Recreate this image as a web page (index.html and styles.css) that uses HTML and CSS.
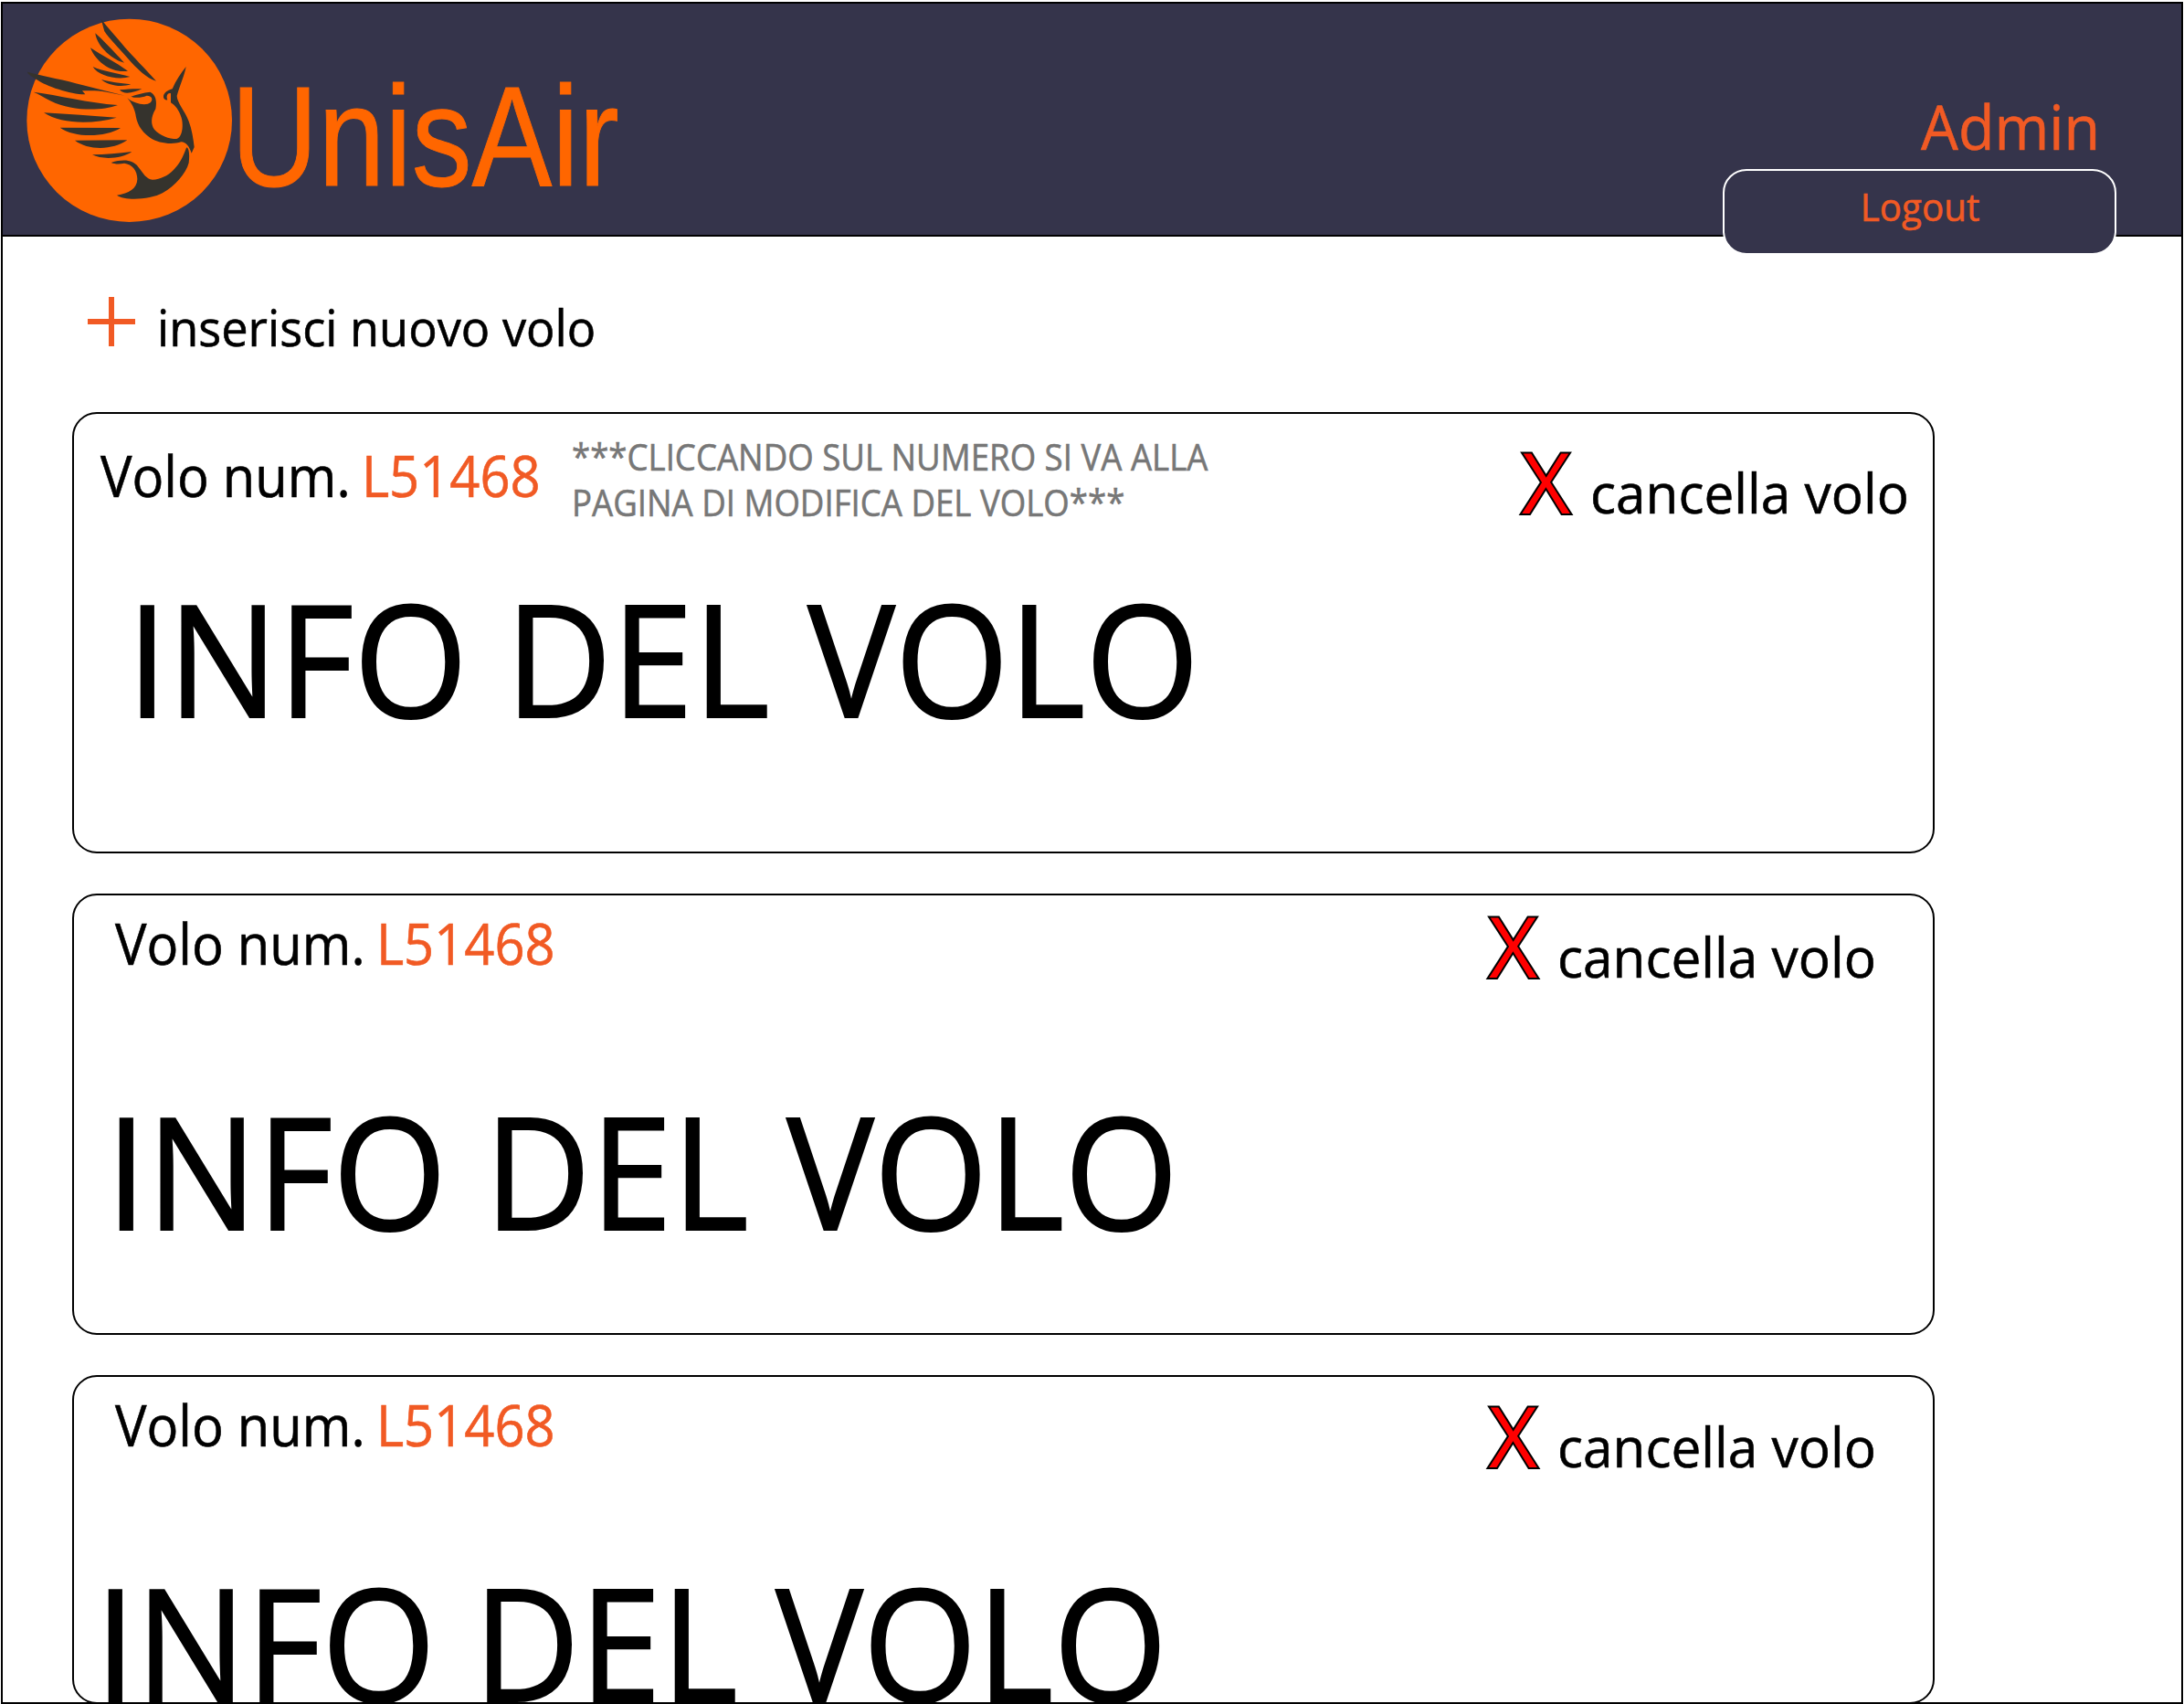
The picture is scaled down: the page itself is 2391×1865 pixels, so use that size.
FILE: index.html
```html
<!DOCTYPE html>
<html lang="it">
<head>
<meta charset="utf-8">
<title>UnisAir - Admin</title>
<link rel="stylesheet" href="styles.css">
</head>
<body>
<div class="frame">
  <header class="header">
    <div class="brand">
      <svg class="logo" viewBox="9 12 744 759" aria-hidden="true">
        <ellipse cx="425" cy="395.500" rx="337" ry="333.500" fill="#ff6600"/>
        <g fill="#35332d">
          <path d="M332 63 C352 88 385 125 410 155 C438 186 475 224 513 266 C482 258 450 226 418 190 C388 155 360 128 343 103 Z"/>
          <path d="M313 109 C335 128 370 165 408 206 C375 200 318 155 313 109Z"/>
          <path d="M297 157 C335 182 380 205 420 233 C370 242 315 205 297 157Z"/>
          <path d="M305 219 C335 234 385 239 427 252 C385 264 322 249 305 219Z"/>
          <path d="M333 261 C360 270 395 272 430 277 C395 289 350 278 333 261Z"/>
          <path d="M393 295 C418 293 440 291 466 292 C440 305 405 312 393 295Z"/>
          <path d="M90 236 C150 252 215 263 270 279 L350 299 L410 314 L350 302 C320 296 290 298 270 298 L280 310 C235 311 150 283 120 261 C108 252 92 246 90 236Z"/>
          <path d="M110 302 C190 312 290 338 387 345 C330 366 235 364 168 332 C145 321 128 309 110 302Z"/>
          <path d="M144 370 C225 374 300 381 383 386 C300 410 200 407 144 370Z"/>
          <path d="M197 419 L396 420 C345 452 245 453 197 419Z"/>
          <path d="M246 461 L418 460 C370 494 290 494 246 461Z"/>
          <path d="M303 508 C345 508 390 503 433 498 C400 522 335 525 303 508Z"/>
          <path d="M418 322 C440 341 480 349 494 337 C504 326 499 314 482 314 C465 321 446 323 430 317 C452 310 470 304 493 302 C512 311 516 333 511 358 C495 384 495 409 507 425 C526 446 555 456 580 456 C601 450 603 406 595 384 C588 362 575 345 561 337 L561 307 C552 303 544 315 550 328 C538 330 534 318 539 309 C548 296 561 294 566 292 C577 266 594 240 611 219 C607 244 590 282 581 315 C582 338 606 362 620 398 C630 424 635 455 638 483 L629 503 C622 482 611 466 595 466 C564 476 520 470 493 452 C460 429 449 402 445 374 C439 350 430 336 418 322Z"/>
          <path d="M365 534 C405 522 436 524 454 548 C471 569 480 588 501 590 C555 587 592 544 612 485 C620 482 624 508 620 535 C611 570 574 612 535 633 C493 656 410 660 384 641 C423 634 450 621 451 588 C451 560 434 539 408 536 C391 540 377 539 365 534Z"/>
        </g>
      </svg>
      <span class="brand-name">UnisAir</span>
    </div>
    <div class="user">Admin</div>
    <a class="logout"><span class="logout-label">Logout</span></a>
  </header>
  <main class="content">
    <a class="add">
      <svg class="plus" viewBox="0 0 52 54" aria-hidden="true">
        <path d="M26 0V54M0 27H52" stroke="#f15a24" stroke-width="6"/>
      </svg>
      <span class="add-label">inserisci nuovo volo</span>
    </a>
    <section class="flight flight-first">
      <div class="flight-head">
        <div class="flight-title">Volo num. <a class="flight-code">L51468</a></div>
        <p class="note">***CLICCANDO SUL NUMERO SI VA ALLA<br>PAGINA DI MODIFICA DEL VOLO***</p>
        <a class="cancel"><span class="cross">X</span><span class="cancel-label">cancella volo</span></a>
      </div>
      <div class="info">INFO DEL VOLO</div>
    </section>
    <section class="flight flight-second">
      <div class="flight-head">
        <div class="flight-title">Volo num. <a class="flight-code">L51468</a></div>
        <a class="cancel"><span class="cross">X</span><span class="cancel-label">cancella volo</span></a>
      </div>
      <div class="info">INFO DEL VOLO</div>
    </section>
    <section class="flight flight-third">
      <div class="flight-head">
        <div class="flight-title">Volo num. <a class="flight-code">L51468</a></div>
        <a class="cancel"><span class="cross">X</span><span class="cancel-label">cancella volo</span></a>
      </div>
      <div class="info">INFO DEL VOLO</div>
    </section>
  </main>
</div>
</body>
</html>
```
FILE: styles.css
```css
* { box-sizing: border-box; }
html { overflow: hidden; }
body {
  margin: 0;
  padding: 2px 1px 0;
  background: #fff;
  color: #000;
  font-family: "Open Sans", "Noto Sans", sans-serif;
  line-height: 1;
  -webkit-text-stroke: .6px currentColor;
}
.frame { height: 1863px; border: 2px solid #000; }

.header {
  position: relative;
  display: flex;
  justify-content: space-between;
  height: 255px;
  padding-right: 82px;
  border-bottom: 2px solid #000;
  background: #35344b;
}
.brand { display: flex; }
.logo { width: 248px; height: 253px; overflow: visible; }
.brand-name {
  margin: 68px 0 0 2px;
  color: #ff6600;
  font-family: "Liberation Sans", Arial, sans-serif;
  font-size: 155px;
  -webkit-text-stroke-width: 1px;
  transform: scaleX(.85);
  transform-origin: left;
}
.user {
  margin-top: 101px;
  color: #f15a24;
  font-size: 67px;
  transform: scaleX(.965);
  transform-origin: left;
}
/* The logout tab hangs over the lower edge of the header */
.logout {
  position: absolute;
  top: 181px;
  right: 71px;
  display: flex;
  justify-content: center;
  width: 431px;
  height: 94px;
  padding-top: 18px;
  border: 2px solid #fff;
  border-radius: 26px;
  background: #35344b;
}
.logout-label {
  color: #f15a24;
  font-size: 42px;
  transform: scaleX(.96);
}

.content { padding-left: 76px; }
.add {
  display: flex;
  align-items: flex-start;
  height: 192px;
  padding: 66px 0 0 17px;
}
.plus { width: 52px; height: 54px; }
.add-label {
  margin: 6px 0 0 24px;
  font-size: 54px;
  transform: scaleX(.969);
  transform-origin: left;
}

.flight {
  width: 2039px;
  height: 483px;
  margin-bottom: 44px;
  border: 2px solid #000;
  border-radius: 27px;
}
.flight-head {
  display: flex;
  height: 150px;
  white-space: nowrap;
}
.flight-title {
  width: 516px;
  margin: 22px 0 0 45px;
  font-size: 61.6px;
  transform: scaleX(.94);
  transform-origin: left;
}
.flight-code { margin-left: -3px; color: #f15a24; }
.note {
  width: 760px;
  margin: 22px 0 0;
  color: #777;
  font-size: 40px;
  line-height: 50px;
  transform: scaleX(.915);
  transform-origin: left;
}
.cancel {
  display: flex;
  align-items: baseline;
  gap: 22px;
  width: 455px;
  margin: 9px 0 0 auto;
}
/* Outline painted behind the fill, so the red strokes keep their full width */
.cross {
  color: #f00;
  font-size: 92px;
  -webkit-text-stroke: 4px #000;
  paint-order: stroke fill;
}
.cancel-label {
  font-size: 60px;
  transform: scaleX(.975);
  transform-origin: left;
}
.info {
  margin: 65px 0 0 35px;
  font-size: 170px;
  white-space: nowrap;
  -webkit-text-stroke-width: 2px;
  transform: scaleX(.943);
  transform-origin: left;
}
.flight-first .flight-title { margin: 37px 0 0 29px; }
.flight-first .cancel { width: 450px; margin-top: 28px; }
.flight-first .info { margin: 31px 0 0 58px; }
.flight-second .cancel, .flight-third .cancel { width: 486px; }
.flight-third { height: 360px; margin-bottom: 0; }
.flight-third .cancel { margin-top: 18px; }
.flight-third .info { margin: 71px 0 0 23px; line-height: .8; }
```
